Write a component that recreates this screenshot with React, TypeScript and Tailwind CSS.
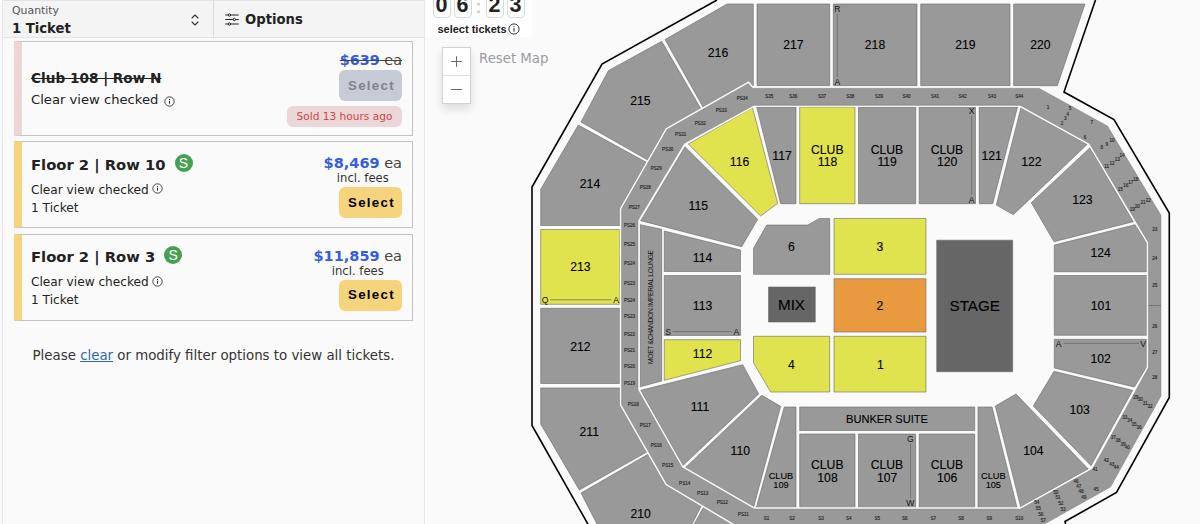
import { Minus, Plus } from "lucide-react";

type Tone = "grey" | "yellow" | "orange" | "dark";

interface Section {
  points: string;
  tone?: Tone;
}

interface Label {
  text: string;
  x: number;
  y: number;
  size?: number;
}

interface Listing {
  title: string;
  price: string;
  sold?: string;
}

const fills: Record<Tone, string> = {
  grey: "#999999",
  yellow: "#e1e34e",
  orange: "#e9993e",
  dark: "#666666",
};

const listings: Listing[] = [
  { title: "Club 108 | Row N", price: "$639", sold: "Sold 13 hours ago" },
  { title: "Floor 2 | Row 10", price: "$8,469" },
  { title: "Floor 2 | Row 3", price: "$11,859" },
];

const sections: Section[] = [
  // upper bowl
  { points: "727,4 753.3,4 753.3,86 748,82 703,107 665,39.5" },
  { points: "757,4 829.7,4 829.7,85.7 757,85.7" },
  { points: "833.3,4 917,4 917,85.7 833.3,85.7" },
  { points: "920.7,4 1010,4 1010,85.7 920.7,85.7" },
  { points: "1013.7,4 1085,4 1057.3,85.7 1013.7,85.7" },
  { points: "608.3,70.7 661.7,41.3 701,109 666,128.5 647.7,160 581,122" },
  { points: "578.3,125 646.3,162.3 620,208.5 620,225.5 540.7,225.5 540.7,189.3" },
  { points: "540.7,229.5 619.7,229.5 619.7,304.3 540.7,304.3", tone: "yellow" },
  { points: "540.7,308.3 619.7,308.3 619.7,383.5 540.7,383.5" },
  { points: "540.7,388 620,388 620,404.5 647.3,451.7 579.3,490 540.7,424" },
  { points: "648.5,454 665.7,485 701.5,505.5 691,526 598,526 581,493" },
  { points: "703.7,507 738,526 693,526" },
  // lower bowl
  { points: "688.3,144 752.5,107.7 777.7,203.3 760.7,216", tone: "yellow" },
  { points: "756.7,107 796,107 796,203.7 780.7,203.7" },
  { points: "799.7,107 855,107 855,203.7 799.7,203.7", tone: "yellow" },
  { points: "858.5,107 915.7,107 915.7,203.7 858.5,203.7" },
  { points: "919.2,107 975.5,107 975.5,203.7 919.2,203.7" },
  { points: "979.2,107 1017.5,107 992.7,203.7 979.2,203.7" },
  { points: "1021,107.3 1087.3,144.3 1013.3,214.7 996.3,205" },
  { points: "1090,147.7 1133.3,221.7 1054,241.7 1031.3,202.7" },
  { points: "1135,224.7 1147,243.3 1147,271.7 1054.3,271.7 1054.3,245" },
  { points: "1054.3,275.5 1147,275.5 1147,335.3 1054.3,335.3" },
  { points: "1054.3,339.3 1147,339.3 1147,366.7 1134.3,387 1054.3,368" },
  { points: "1054,371.3 1132.7,390.3 1091,465.7 1033.3,406" },
  { points: "1016,394 1088.3,469 1020.7,507 995.3,406" },
  { points: "978,407 992,407 1017,507.5 978,507.5" },
  { points: "919.2,434 974.7,434 974.7,507.5 919.2,507.5" },
  { points: "858.5,434 915.7,434 915.7,507.5 858.5,507.5" },
  { points: "799.7,434 855,434 855,507.5 799.7,507.5" },
  { points: "799.7,407 974.7,407 974.7,430.5 799.7,430.5" },
  { points: "784.3,407 796,407 796,507.5 756.3,507.5" },
  { points: "761.7,395.3 780.7,406.3 753.7,507 685,468" },
  { points: "742.7,364.7 758.7,394 682.7,465.7 640.7,390.3" },
  { points: "664.3,339.7 740.5,339.7 740.5,360.7 664.3,380.3", tone: "yellow" },
  { points: "664.3,275.5 740.5,275.5 740.5,335.5 664.3,335.5" },
  { points: "664.3,231 740.5,250 740.5,271.5 664.3,271.5" },
  { points: "685,146.7 757.7,219.3 741.7,246.7 640.7,220.7" },
  { points: "640.3,224.7 661.7,229.3 661.7,381 640.3,386.7" },
  // floor
  { points: "766.7,225 807.7,225 819.3,218.5 829.7,218.5 829.7,274.3 753.5,274.3 753.5,248.3" },
  { points: "834,218.5 926,218.5 926,274.3 834,274.3", tone: "yellow" },
  { points: "834,278.7 926,278.7 926,332 834,332", tone: "orange" },
  { points: "834,336.3 926,336.3 926,392 834,392", tone: "yellow" },
  { points: "753.5,336.3 829.7,336.3 829.7,392 770.7,392 753.5,362.7", tone: "yellow" },
  { points: "768.5,287 815.3,287 815.3,322 768.5,322", tone: "dark" },
  { points: "936.7,240.2 1012.7,240.2 1012.7,371.7 936.7,371.7", tone: "dark" },
];

// suite ring between the two bowls
const ringPath =
  "M621.5 209 667 129.5 748.3 83.5 752.5 88.3H1039L1107.5 126 1161 215.3V396L1110.5 487 1041 526H738L666.8 483.8 621.5 404.5ZM638 220.3V390L682 467.5 754 509H1020.5L1092.5 469 1148.4 367.5V242.5L1089.5 143.5 1020.5 105.4H753.5L684 143.5Z";

const labels: Label[] = [
  { text: "216", x: 718, y: 53 },
  { text: "217", x: 793.3, y: 45 },
  { text: "218", x: 875, y: 45 },
  { text: "219", x: 965.3, y: 45 },
  { text: "220", x: 1040.3, y: 45 },
  { text: "215", x: 640.3, y: 100.7 },
  { text: "214", x: 590, y: 183.3 },
  { text: "213", x: 580.3, y: 267 },
  { text: "212", x: 580.3, y: 346.3 },
  { text: "211", x: 589.3, y: 431.3 },
  { text: "210", x: 640.7, y: 513.3 },
  { text: "116", x: 739.5, y: 161.3 },
  { text: "117", x: 782, y: 155.7 },
  { text: "CLUB", x: 827.3, y: 149.3 },
  { text: "118", x: 827.5, y: 162 },
  { text: "CLUB", x: 887, y: 149.3 },
  { text: "119", x: 887.2, y: 162 },
  { text: "CLUB", x: 947, y: 149.3 },
  { text: "120", x: 947.2, y: 162 },
  { text: "121", x: 991.7, y: 155.7 },
  { text: "122", x: 1031.3, y: 161.3 },
  { text: "123", x: 1082.3, y: 200 },
  { text: "124", x: 1100.7, y: 253 },
  { text: "101", x: 1101, y: 306 },
  { text: "102", x: 1100.7, y: 359 },
  { text: "103", x: 1079.7, y: 409.3 },
  { text: "104", x: 1033.3, y: 450.7 },
  { text: "CLUB", x: 993.3, y: 475.3, size: 9.2 },
  { text: "105", x: 993.3, y: 484.7, size: 9.2 },
  { text: "CLUB", x: 947, y: 465 },
  { text: "106", x: 947.2, y: 478 },
  { text: "CLUB", x: 887, y: 465 },
  { text: "107", x: 887.2, y: 478 },
  { text: "CLUB", x: 827.3, y: 465 },
  { text: "108", x: 827.5, y: 478 },
  { text: "CLUB", x: 781, y: 475.3, size: 9.2 },
  { text: "109", x: 781, y: 484.7, size: 9.2 },
  { text: "BUNKER SUITE", x: 887, y: 419.2, size: 11.1 },
  { text: "110", x: 740.3, y: 451 },
  { text: "111", x: 700, y: 406.7 },
  { text: "112", x: 702.5, y: 354 },
  { text: "113", x: 702.5, y: 306 },
  { text: "114", x: 702.5, y: 257.3 },
  { text: "115", x: 698.3, y: 206 },
  { text: "6", x: 791.5, y: 246.7 },
  { text: "3", x: 880, y: 246.7 },
  { text: "2", x: 880, y: 305.5 },
  { text: "1", x: 880.5, y: 365 },
  { text: "4", x: 791.5, y: 365 },
  { text: "MIX", x: 791.5, y: 304.7, size: 15.2 },
  { text: "STAGE", x: 974.7, y: 305.8, size: 15.2 },
];

const rowLabels: Label[] = [
  { text: "R", x: 837.3, y: 9 },
  { text: "A", x: 837.3, y: 82.3 },
  { text: "X", x: 971.5, y: 111 },
  { text: "A", x: 971.5, y: 200 },
  { text: "Q", x: 545, y: 299.7 },
  { text: "A", x: 616, y: 300 },
  { text: "S", x: 668, y: 331.5 },
  { text: "A", x: 736.3, y: 331.5 },
  { text: "A", x: 1058.7, y: 344 },
  { text: "V", x: 1143, y: 344 },
  { text: "G", x: 910.3, y: 439.2 },
  { text: "W", x: 910.3, y: 503 },
];

const rowLines = [
  [837.3, 14, 837.3, 77],
  [971.7, 115.5, 971.7, 195],
  [550, 299.8, 611.5, 299.8],
  [672.5, 331.5, 731.5, 331.5],
  [1063.5, 343.3, 1139, 343.3],
  [910.5, 444, 910.5, 498],
  [1149, 305.5, 1161, 305.5],
];

type Suite = [string, number, number];

const suites: Suite[] = [
  ["S35", 769.3, 96.7], ["S36", 793.3, 96.7], ["S37", 822, 96.7], ["S38", 850.3, 96.7],
  ["S39", 879, 96.7], ["S40", 906.5, 96.7], ["S41", 935, 96.7], ["S42", 962.5, 96.7],
  ["S43", 992, 96.7], ["S44", 1019.3, 96.7],
  ["S1", 766.5, 518], ["S2", 792, 518], ["S3", 821, 518], ["S4", 848.7, 518], ["S5", 877.3, 518],
  ["S6", 904.7, 518], ["S7", 933.3, 518], ["S8", 961, 518], ["S9", 989.3, 518], ["S10", 1019.3, 518],
  ["PS34", 742.3, 98.3], ["PS33", 721.3, 110.3], ["PS32", 700.3, 123], ["PS31", 680.7, 134.3],
  ["PS30", 667.7, 149], ["PS29", 656.3, 168.7], ["PS28", 645.3, 187], ["PS27", 634.3, 207.3],
  ["PS26", 629.5, 225.3], ["PS25", 629.5, 244.3], ["PS24", 629.5, 263.5], ["PS23", 629.5, 283.3],
  ["PS24", 629.5, 300], ["PS23", 629.5, 316.7], ["PS22", 629.5, 334], ["PS21", 629.5, 350.7],
  ["PS20", 629.5, 366.7], ["PS19", 629.5, 383], ["PS18", 633.3, 404.7], ["PS17", 645.3, 425.7],
  ["PS16", 656.3, 445], ["PS15", 667.7, 465], ["PS14", 684.7, 483], ["PS13", 702.7, 493],
  ["PS12", 722.3, 502.7], ["PS11", 743.3, 514.7],
  ["1", 1048, 107], ["5", 1070, 108.7], ["4", 1067.7, 114], ["3", 1065.3, 118.7], ["2", 1062, 123.7],
  ["7", 1091.7, 122.7], ["6", 1085, 137], ["8", 1101.7, 147], ["9", 1106.7, 144.3], ["10", 1112, 140.7],
  ["11", 1106.7, 166], ["12", 1112, 163], ["13", 1117.3, 159.3], ["14", 1122, 155.7],
  ["15", 1120.3, 189.3], ["16", 1125.7, 185.7], ["17", 1130.7, 182], ["18", 1135.7, 179],
  ["19", 1132.3, 209.7], ["20", 1137.3, 206], ["21", 1143, 202.7], ["22", 1148.3, 200.3],
  ["23", 1154.7, 229], ["24", 1154.7, 258.7], ["25", 1154.7, 285], ["26", 1154.7, 326.7],
  ["27", 1154.7, 352.7], ["28", 1154.7, 377.3],
  ["29", 1135.7, 397.3], ["30", 1140.3, 399.7], ["31", 1145.3, 403.3], ["32", 1150, 406.3],
  ["33", 1124.7, 417.3], ["34", 1129.7, 420.7], ["35", 1134, 424.3], ["36", 1139, 427.7],
  ["37", 1113.3, 437], ["38", 1118, 440.3], ["39", 1123, 444], ["40", 1127.3, 447.7],
  ["42", 1106.3, 460.7], ["43", 1111.7, 464], ["44", 1116.3, 467], ["41", 1095, 469.3],
  ["46", 1076, 481.3], ["47", 1078.7, 486], ["48", 1081, 491.3], ["49", 1083.7, 497.3],
  ["45", 1096, 489], ["50", 1055.7, 492.3], ["51", 1058, 497.7], ["52", 1060.7, 503.7],
  ["53", 1063, 509.3], ["54", 1036.7, 502.7], ["55", 1038.3, 508.7], ["56", 1040.7, 514.7],
  ["57", 1043.3, 520.7],
];

function InfoIcon({ className }: { className: string }) {
  return (
    <svg viewBox="0 0 12 12" fill="none" stroke="currentColor" className={className}>
      <circle cx="6" cy="6" r="5.1" strokeWidth="0.9" />
      <path d="M6 5.3v3.2M6 3.2v1.1" strokeWidth="1.1" />
    </svg>
  );
}

function FilterBar() {
  return (
    <div className="flex h-[38px] shrink-0 border-t border-b border-[#e2e3e6] bg-[#f4f4f4] text-[#222]">
      <div className="flex w-[211px] items-center justify-between border-r border-[#dcdde0] pr-[14px] pl-[9px]">
        <div className="whitespace-nowrap">
          <div className="text-[10.9px] leading-[18px] text-[#555]">Quantity</div>
          <div className="text-[13.2px] leading-[17px] font-bold">1 Ticket</div>
        </div>
        <svg viewBox="0 0 8 12" fill="none" stroke="#333" strokeWidth="1.1" className="mt-[2px] h-3 w-2">
          <path d="M1 4 4 1l3 3M1 8l3 3 3-3" strokeLinecap="round" strokeLinejoin="round" />
        </svg>
      </div>
      <div className="flex items-center gap-[6px] pt-px pl-[11px]">
        <svg viewBox="0 0 14 13" fill="#f4f4f4" stroke="#222" strokeWidth="1" className="h-[13px] w-3.5">
          <path d="M.3 2h13.4M.3 6.5h13.4M.3 11h13.4" />
          <circle cx="4.4" cy="2" r="1.2" />
          <circle cx="9.3" cy="6.5" r="1.2" />
          <circle cx="4.4" cy="11" r="1.2" />
        </svg>
        <span className="text-[13.2px] font-bold">Options</span>
      </div>
    </div>
  );
}

function SoldCard({ listing }: { listing: Listing }) {
  return (
    <div className="flex h-[95px] justify-between border border-l-8 border-[#c2c2c2] border-l-[#edd5d6] pr-[10px] pl-[9px] text-[#222]">
      <div className="pt-[26px] whitespace-nowrap">
        <div className="text-[13.65px] leading-5 font-bold line-through">{listing.title}</div>
        <div className="mt-[2px] flex items-center gap-[6px] text-[13.15px] leading-5">
          Clear view checked
          <InfoIcon className="mt-[3px] h-[11px] w-[11px]" />
        </div>
      </div>
      <div className="flex flex-col items-end pt-[9px] whitespace-nowrap">
        <div className="text-[14.4px] leading-[18px] text-[#444] line-through">
          <b className="text-[#345ddf]">{listing.price}</b> ea
        </div>
        <button className="mt-px h-[31px] w-[63px] rounded-md bg-[#c6ccd6] pt-px pl-[2px] font-['Liberation_Sans',sans-serif] text-[13.3px] font-bold tracking-[1.3px] text-[#808389]">
          Select
        </button>
        <div className="mt-[5px] flex h-[21px] w-[115px] items-center justify-center rounded-md bg-[#ecd7d8] pt-[2px] text-[10.6px] text-[#d34348]">
          {listing.sold}
        </div>
      </div>
    </div>
  );
}

function TicketCard({ listing }: { listing: Listing }) {
  return (
    <div className="flex h-[87px] justify-between border border-l-8 border-[#c2c2c2] border-l-[#f6d47e] pr-[10px] pl-[9px] text-[#222]">
      <div className="pt-[11.5px] whitespace-nowrap">
        <div className="flex items-center gap-[9px] text-[14.75px] leading-[22px] font-bold">
          {listing.title}
          <span className="-mt-[4px] flex h-[18px] w-[18px] items-center justify-center rounded-full bg-[#46a052] font-['Liberation_Sans',sans-serif] text-[14px] leading-none font-normal text-white">
            S
          </span>
        </div>
        <div className="mt-[5px] flex items-center gap-[3px] text-[12.15px] leading-[18px]">
          Clear view checked
          <InfoIcon className="-mt-[2px] h-[11px] w-[11px]" />
        </div>
        <div className="text-[12.15px] leading-[19px]">1 Ticket</div>
      </div>
      <div className="flex flex-col items-end pt-[12px] whitespace-nowrap">
        <div className="flex flex-col items-center">
          <div className="text-[14.5px] leading-[18px] text-[#444]">
            <b className="text-[#345ddf]">{listing.price}</b> ea
          </div>
          <div className="text-[11.6px] leading-[13px] text-[#333]">incl. fees</div>
        </div>
        <button className="mt-[2px] h-[31px] w-[63px] rounded-md bg-[#f6d47e] pl-[2px] font-['Liberation_Sans',sans-serif] text-[13.3px] font-bold tracking-[1.3px] text-black">
          Select
        </button>
      </div>
    </div>
  );
}

function Countdown() {
  return (
    <div className="absolute top-0 left-0 flex h-[37px] w-[107px] flex-col items-center bg-white font-['Liberation_Sans',sans-serif] font-bold text-[#222]">
      <div className="flex h-[18px] items-end gap-[3px] text-[21.5px]">
        {["0", "6", ":", "2", "3"].map((ch, i) =>
          ch === ":" ? (
            <span key={i} className="flex h-[22px] w-[8px] items-center justify-center text-[18px] leading-none font-bold text-[#c9ccd1]">
              :
            </span>
          ) : (
            <span key={i} className="flex h-[24px] w-[18px] items-center justify-center rounded-[4px] border border-[#d5dae1] leading-none">
              {ch}
            </span>
          )
        )}
      </div>
      <div className="mt-[4px] flex items-center gap-px text-[11px] leading-[14px] whitespace-nowrap">
        select tickets
        <InfoIcon className="h-3 w-3" />
      </div>
    </div>
  );
}

function MapControls() {
  return (
    <div className="absolute top-[47px] left-[17px] flex items-start gap-[9px]">
      <div className="flex w-[29px] flex-col border border-[#d2d2d4] bg-white text-[#666] shadow-[0_5px_10px_rgba(0,0,0,0.12)]">
        <button className="flex h-[28px] items-center justify-center border-b border-[#dcdcde]">
          <Plus size={17} strokeWidth={1.4} />
        </button>
        <button className="flex h-[27px] items-center justify-center">
          <Minus size={17} strokeWidth={1.4} />
        </button>
      </div>
      <span className="-ml-px text-[13.3px] leading-[24px] whitespace-nowrap text-[#999ba3]">Reset Map</span>
    </div>
  );
}

function SeatMap() {
  return (
    <svg viewBox="425 0 775 524" className="block h-[524px] w-[775px] font-['Liberation_Sans',sans-serif]" textAnchor="middle">
      <g fill="none" stroke="#000" strokeWidth="1.6">
        <path d="M717 0 602 64 532 187V425.5L589 526" />
        <path d="M1095.5 0 1064 92 1114 119.5 1169.3 213V397.5L1116.5 492.5 1065 521.5 1066 526" />
      </g>
      <g stroke="#686868" strokeWidth="0.6">
        {sections.map((s) => (
          <polygon key={s.points} points={s.points} fill={fills[s.tone ?? "grey"]} />
        ))}
      </g>
      <path d={ringPath} fill="none" stroke="#fafafa" strokeWidth="3.4" />
      <path d={ringPath} fill="#999" fillRule="evenodd" stroke="#777" strokeWidth="0.4" />
      <g stroke="#6a6a6a" strokeWidth="0.8">
        {rowLines.map(([x1, y1, x2, y2]) => (
          <line key={`${x1}-${y1}`} x1={x1} y1={y1} x2={x2} y2={y2} />
        ))}
      </g>
      {labels.map((l) => {
        const size = l.size ?? 12.2;
        return (
          <text key={`${l.text}-${l.x}`} x={l.x} y={l.y + size * 0.36} fontSize={size} stroke="#000" strokeWidth="0.1">
            {l.text}
          </text>
        );
      })}
      {rowLabels.map((l) => (
        <text key={`${l.x}-${l.y}`} x={l.x} y={l.y + 3} fontSize="8.6" fill="#111">
          {l.text}
        </text>
      ))}
      {suites.map(([text, x, y]) => (
        <text key={`${x}-${y}`} x={x} y={y + 1.6} fontSize="4.6" fill="#222" stroke="#222" strokeWidth="0.12">
          {text}
        </text>
      ))}
      <text transform="translate(653.3 307) rotate(-90)" fontSize="6.6" textLength="114" fill="#111">
        MOET &amp;CHANDON IMPERIAL LOUNGE
      </text>
    </svg>
  );
}

export default function App() {
  return (
    <div className="flex h-[524px] w-[1200px] overflow-hidden bg-[#fafafa] font-['DejaVu_Sans',sans-serif]">
      <aside className="ml-[2px] flex w-[423px] flex-col border-x border-[#e6e7ea]">
        <FilterBar />
        <div className="flex flex-col gap-[5.5px] pt-[2.5px] pr-[11px] pl-[11px]">
          {listings.map((l) =>
            l.sold ? <SoldCard key={l.title} listing={l} /> : <TicketCard key={l.title} listing={l} />
          )}
        </div>
        <p className="mt-[25px] text-center text-[13.35px] leading-5 whitespace-nowrap text-[#333]">
          Please <a className="text-[#2a66b3] underline">clear</a> or modify filter options to view all tickets.
        </p>
      </aside>
      <main className="relative w-[775px]">
        <SeatMap />
        <Countdown />
        <MapControls />
      </main>
    </div>
  );
}
